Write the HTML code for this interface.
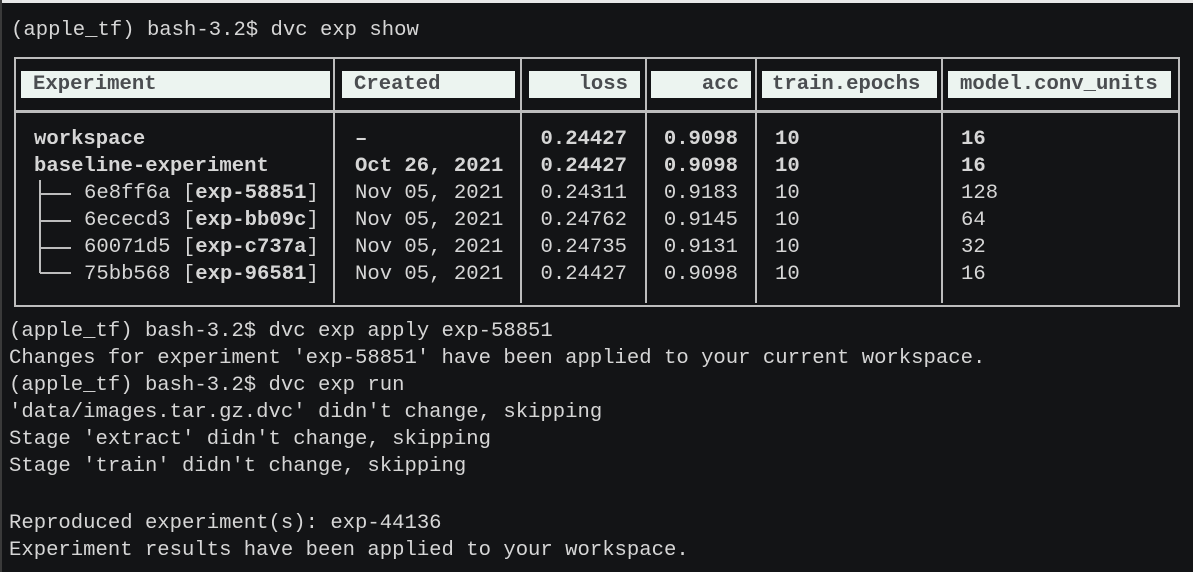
<!DOCTYPE html>
<html><head><meta charset="utf-8"><style>
html,body{margin:0;padding:0;}
body{width:1193px;height:572px;background:#131416;position:relative;overflow:hidden;font-family:"Liberation Mono","DejaVu Sans Mono",monospace;font-size:20.6px;color:#d6d6d6;}
.t{position:absolute;white-space:pre;line-height:27px;height:27px;}
.b{font-weight:bold;}
.r{text-align:right;}
.hd{position:absolute;top:71px;height:27px;background:#ecf4f0;color:#4a4d50;font-weight:bold;line-height:27px;white-space:pre;box-sizing:border-box;padding:0 12px;}
.vl{position:absolute;width:2px;background:#bdbdbd;}
.hl{position:absolute;height:2px;background:#bdbdbd;}
</style></head><body>
<div style="position:absolute;left:0;top:0;width:1193px;height:3px;background:#e8e8e8"></div>
<div style="position:absolute;left:0;top:0;width:2px;height:572px;background:#3a3a3a"></div>
<div class="t" style="left:11px;top:17px">(apple_tf) bash-3.2$ dvc exp show</div>

<div style="position:absolute;left:14px;top:57px;width:1162px;height:246px;border:2px solid #bdbdbd;"></div>
<div class="hl" style="left:14px;top:110px;width:1164px;height:3px"></div>
<div class="vl" style="left:333px;top:59px;height:244px"></div>
<div class="vl" style="left:520px;top:59px;height:244px"></div>
<div class="vl" style="left:645px;top:59px;height:244px"></div>
<div class="vl" style="left:755px;top:59px;height:244px"></div>
<div class="vl" style="left:941px;top:59px;height:244px"></div>

<div class="hd" style="left:21px;width:309px">Experiment</div>
<div class="hd" style="left:342px;width:173px">Created</div>
<div class="hd r" style="left:529px;width:111px">loss</div>
<div class="hd r" style="left:651px;width:100px">acc</div>
<div class="hd" style="left:762px;width:175px;padding:0 10px">train.epochs</div>
<div class="hd" style="left:948px;width:223px;padding:0 12px">model.conv_units</div>

<div class="t b" style="left:34px;top:126px">workspace</div>
<div class="t b" style="left:34px;top:153px">baseline-experiment</div>
<div class="vl" style="left:39px;top:180px;height:93px;width:2px"></div>
<div class="hl" style="left:40px;top:193px;width:31px"></div>
<div class="hl" style="left:40px;top:220px;width:31px"></div>
<div class="hl" style="left:40px;top:247px;width:31px"></div>
<div class="hl" style="left:40px;top:272px;width:31px"></div>
<div class="t" style="left:84px;top:180px">6e8ff6a [<b>exp-58851</b>]</div>
<div class="t" style="left:84px;top:207px">6ececd3 [<b>exp-bb09c</b>]</div>
<div class="t" style="left:84px;top:234px">60071d5 [<b>exp-c737a</b>]</div>
<div class="t" style="left:84px;top:261px">75bb568 [<b>exp-96581</b>]</div>

<div class="t b" style="left:355px;top:126px">–</div>
<div class="t b" style="left:355px;top:153px">Oct 26, 2021</div>
<div class="t" style="left:355px;top:180px">Nov 05, 2021</div>
<div class="t" style="left:355px;top:207px">Nov 05, 2021</div>
<div class="t" style="left:355px;top:234px">Nov 05, 2021</div>
<div class="t" style="left:355px;top:261px">Nov 05, 2021</div>

<div class="t b r" style="left:520px;width:107px;top:126px">0.24427</div>
<div class="t b r" style="left:520px;width:107px;top:153px">0.24427</div>
<div class="t r" style="left:520px;width:107px;top:180px">0.24311</div>
<div class="t r" style="left:520px;width:107px;top:207px">0.24762</div>
<div class="t r" style="left:520px;width:107px;top:234px">0.24735</div>
<div class="t r" style="left:520px;width:107px;top:261px">0.24427</div>

<div class="t b r" style="left:645px;width:93px;top:126px">0.9098</div>
<div class="t b r" style="left:645px;width:93px;top:153px">0.9098</div>
<div class="t r" style="left:645px;width:93px;top:180px">0.9183</div>
<div class="t r" style="left:645px;width:93px;top:207px">0.9145</div>
<div class="t r" style="left:645px;width:93px;top:234px">0.9131</div>
<div class="t r" style="left:645px;width:93px;top:261px">0.9098</div>

<div class="t b" style="left:775px;top:126px">10</div>
<div class="t b" style="left:775px;top:153px">10</div>
<div class="t" style="left:775px;top:180px">10</div>
<div class="t" style="left:775px;top:207px">10</div>
<div class="t" style="left:775px;top:234px">10</div>
<div class="t" style="left:775px;top:261px">10</div>

<div class="t b" style="left:961px;top:126px">16</div>
<div class="t b" style="left:961px;top:153px">16</div>
<div class="t" style="left:961px;top:180px">128</div>
<div class="t" style="left:961px;top:207px">64</div>
<div class="t" style="left:961px;top:234px">32</div>
<div class="t" style="left:961px;top:261px">16</div>

<div class="t" style="left:9px;top:318px">(apple_tf) bash-3.2$ dvc exp apply exp-58851</div>
<div class="t" style="left:9px;top:345px">Changes for experiment 'exp-58851' have been applied to your current workspace.</div>
<div class="t" style="left:9px;top:372px">(apple_tf) bash-3.2$ dvc exp run</div>
<div class="t" style="left:9px;top:399px">'data/images.tar.gz.dvc' didn't change, skipping</div>
<div class="t" style="left:9px;top:426px">Stage 'extract' didn't change, skipping</div>
<div class="t" style="left:9px;top:453px">Stage 'train' didn't change, skipping</div>
<div class="t" style="left:9px;top:510px">Reproduced experiment(s): exp-44136</div>
<div class="t" style="left:9px;top:537px">Experiment results have been applied to your workspace.</div>
</body></html>
